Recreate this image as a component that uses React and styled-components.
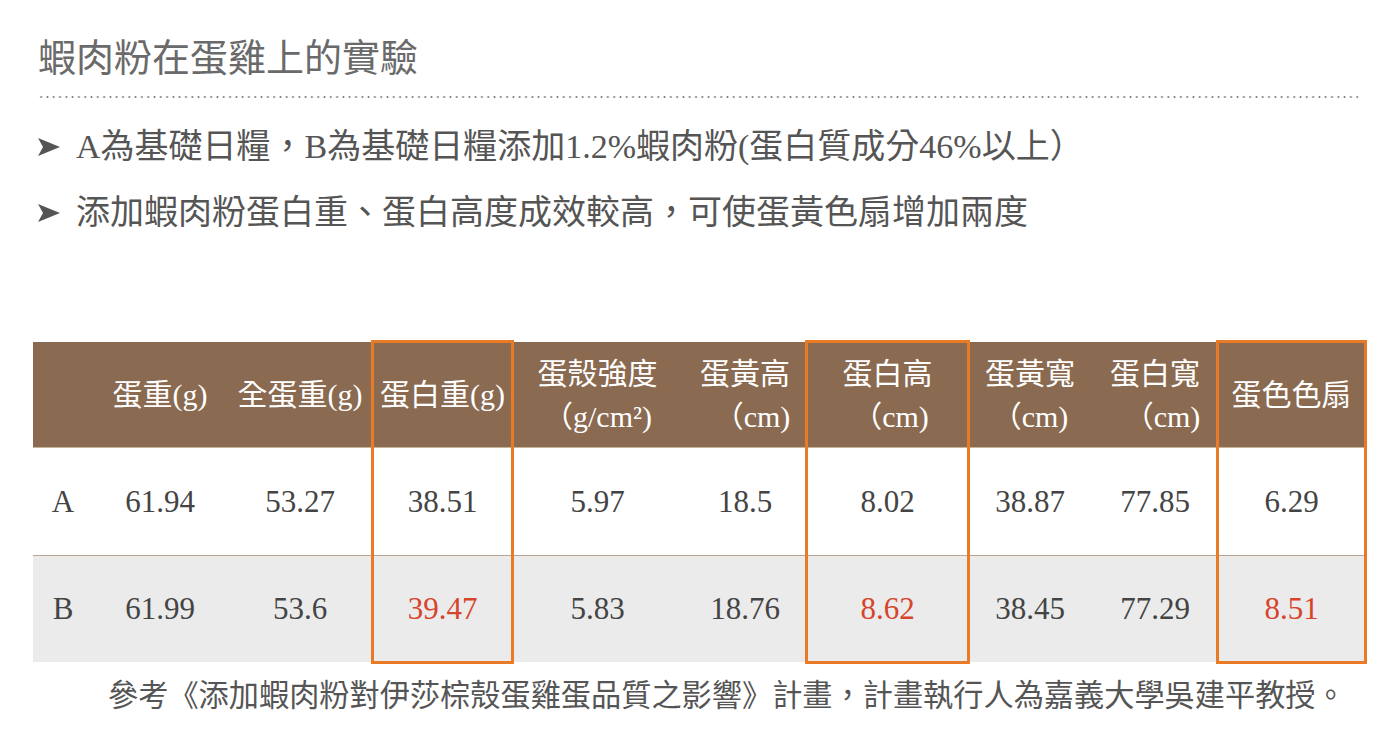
import styled, { createGlobalStyle } from 'styled-components';

const GlobalStyle = createGlobalStyle`
  html, body {
    margin: 0;
    padding: 0;
    background: #fff;
  }
  body {
    font-family: "Liberation Serif", "Noto Sans CJK TC", serif;
  }
`;

const Page = styled.div`
  width: 1400px;
  height: 753px;
  overflow: hidden;
  padding: 33px 0 0 0;
  box-sizing: border-box;
`;

const Title = styled.h1`
  margin: 0 0 0 38px;
  font-size: 38px;
  line-height: 50px;
  font-weight: 400;
  color: #6a6a6a;
`;

const Dots = styled.div`
  margin: 13px 38px 0 38px;
  height: 2px;
  background-image: radial-gradient(circle, #7a7a7a 0.9px, transparent 1.1px);
  background-size: 6.3px 2px;
  background-repeat: repeat-x;
`;

const Bullets = styled.ul`
  list-style: none;
  margin: 26px 0 0 0;
  padding: 0 0 0 38px;
  display: flex;
  flex-direction: column;
  gap: 20px;
`;

const Bullet = styled.li`
  display: flex;
  align-items: center;
  gap: 16px;
  font-size: 34px;
  line-height: 46px;
  color: #555;
`;

const Arrow = () => (
  <svg width="22" height="18" viewBox="0 0 22 18">
    <polygon points="0,0 22,9 0,18 5,9" fill="#555" />
  </svg>
);

const Table = styled.div`
  display: flex;
  margin: 106px 0 0 33px;
`;

const Column = styled.div`
  width: ${(p) => p.$w}px;
  display: flex;
  flex-direction: column;
  position: relative;
  outline: ${(p) => (p.$hl ? '3px solid #e97a26' : 'none')};
  outline-offset: -1px;
  z-index: ${(p) => (p.$hl ? 1 : 0)};
`;

const HeadCell = styled.div`
  height: 106px;
  background: #8a6a50;
  border-bottom: 1px solid #c8b49b;
  box-sizing: border-box;
  display: flex;
  flex-direction: column;
  justify-content: center;
  align-items: center;
  color: #fff;
  font-size: 30px;
  line-height: 43px;
  white-space: nowrap;
`;

const Unit = styled.span`
  padding-left: ${(p) => p.$pad || 0}px;
`;

const Cell = styled.div`
  height: 107px;
  box-sizing: border-box;
  display: flex;
  align-items: center;
  justify-content: center;
  background: ${(p) => (p.$alt ? '#ebebeb' : '#fff')};
  border-top: ${(p) => (p.$alt ? '1px solid #b9a48e' : 'none')};
  font-size: 31px;
  color: ${(p) => (p.$red ? '#d6452b' : '#444')};
`;

const Footer = styled.p`
  margin: 14px 0 0 108px;
  font-size: 30.2px;
  line-height: 40px;
  white-space: nowrap;
  color: #555;
`;

const columns = [
  { w: 60, head: [''], a: 'A', b: 'B' },
  { w: 134, head: ['蛋重(g)'], a: '61.94', b: '61.99' },
  { w: 146, head: ['全蛋重(g)'], a: '53.27', b: '53.6' },
  { w: 139, head: ['蛋白重(g)'], a: '38.51', b: '39.47', hl: true },
  { w: 171, head: ['蛋殼強度', '（g/cm²)'], a: '5.97', b: '5.83' },
  { w: 124, head: ['蛋黃高', '（cm)'], a: '18.5', b: '18.76', pad: 14 },
  { w: 161, head: ['蛋白高', '（cm)'], a: '8.02', b: '8.62', hl: true, pad: 6 },
  { w: 124, head: ['蛋黃寬', '（cm)'], a: '38.87', b: '38.45' },
  { w: 126, head: ['蛋白寬', '（cm)'], a: '77.85', b: '77.29', pad: 14 },
  { w: 147, head: ['蛋色色扇'], a: '6.29', b: '8.51', hl: true },
];

const App = () => {
  return (
    <Page>
      <GlobalStyle />
      <Title>蝦肉粉在蛋雞上的實驗</Title>
      <Dots />
      <Bullets>
        <Bullet>
          <Arrow />
          A為基礎日糧，B為基礎日糧添加1.2%蝦肉粉(蛋白質成分46%以上）
        </Bullet>
        <Bullet>
          <Arrow />
          添加蝦肉粉蛋白重、蛋白高度成效較高，可使蛋黃色扇增加兩度
        </Bullet>
      </Bullets>
      <Table>
        {columns.map((c, i) => (
          <Column key={i} $w={c.w} $hl={c.hl}>
            <HeadCell>
              <span>{c.head[0]}</span>
              {c.head[1] && <Unit $pad={c.pad}>{c.head[1]}</Unit>}
            </HeadCell>
            <Cell>{c.a}</Cell>
            <Cell $alt $red={c.hl}>{c.b}</Cell>
          </Column>
        ))}
      </Table>
      <Footer>
        參考《添加蝦肉粉對伊莎棕殼蛋雞蛋品質之影響》計畫，計畫執行人為嘉義大學吳建平教授。
      </Footer>
    </Page>
  );
};

export default App;
